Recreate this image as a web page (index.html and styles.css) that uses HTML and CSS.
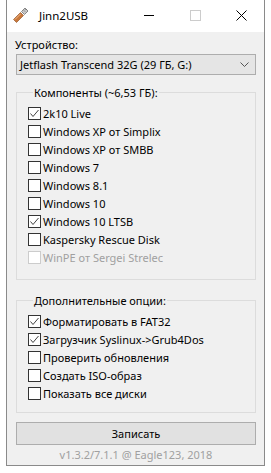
FILE: index.html
```html
<!DOCTYPE html>
<html lang="ru">
<head>
<meta charset="UTF-8">
<title>Jinn2USB</title>
<link rel="stylesheet" href="styles.css">
</head>
<body>
    <div class="window">
        <div class="titlebar">
            <svg class="app-icon" width="16" height="16" viewBox="0 0 16 16">
                <path d="M0.5 12.5 L7.5 5.5 L10.5 8.5 L3.5 15.5 Z" fill="#c8773a" stroke="#8a4a1c" stroke-width="0.6"/>
                <path d="M2 12.5 L7.5 7" stroke="#f3b98a" stroke-width="1"/>
                <path d="M8.5 4.5 L12 1 L15 4 L11.5 7.5 Z" fill="#c9c9c9" stroke="#6e6e6e" stroke-width="0.8"/>
                <path d="M11 3.5 L12 4.5 M12.5 2 L13.5 3" stroke="#555" stroke-width="0.8"/>
            </svg>
            <span class="title">Jinn2USB</span>
            <div class="controls">
                <span class="ctl"><span class="min"></span></span>
                <span class="ctl"><span class="max"></span></span>
                <span class="ctl">
                    <svg width="11" height="11" viewBox="0 0 11 11"><path d="M0.5 0.5 L10.5 10.5 M10.5 0.5 L0.5 10.5" stroke="#000" stroke-width="1"/></svg>
                </span>
            </div>
        </div>

        <div class="content">
            <div class="label">Устройство:</div>
            <div class="select">
                <span>Jetflash Transcend 32G (29 ГБ, G:)</span>
                <svg width="9" height="5" viewBox="0 0 9 5"><path d="M0.5 0.5 L4.5 4.5 L8.5 0.5" stroke="#555" fill="none" stroke-width="1"/></svg>
            </div>

            <fieldset class="group">
                <legend>Компоненты (~6,53 ГБ):</legend>
                <div class="check on">2k10 Live</div>
                <div class="check">Windows XP от Simplix</div>
                <div class="check">Windows XP от SMBB</div>
                <div class="check">Windows 7</div>
                <div class="check">Windows 8.1</div>
                <div class="check">Windows 10</div>
                <div class="check on">Windows 10 LTSB</div>
                <div class="check">Kaspersky Rescue Disk</div>
                <div class="check disabled">WinPE от Sergei Strelec</div>
            </fieldset>

            <fieldset class="group options">
                <legend>Дополнительные опции:</legend>
                <div class="check on">Форматировать в FAT32</div>
                <div class="check on">Загрузчик Syslinux-&gt;Grub4Dos</div>
                <div class="check">Проверить обновления</div>
                <div class="check">Создать ISO-образ</div>
                <div class="check">Показать все диски</div>
            </fieldset>

            <div class="button">Записать</div>
            <div class="version">v1.3.2/7.1.1 @ Eagle123, 2018</div>
        </div>
    </div>
</body>
</html>
```

FILE: styles.css
```css
body {
    margin: 0;
    background-color: #ffffff;
    font-family: 'Noto Sans', 'DejaVu Sans', sans-serif;
    font-size: 11px;
    color: #000000;
}
.window {
    margin: 0 0 0 6px;
    width: 257px;
    height: 465px;
    border: 1px solid #8a8a8a;
    border-top: none;
    display: flex;
    flex-direction: column;
    background-color: #f0f0f0;
}
.titlebar {
    height: 32px;
    background-color: #ffffff;
    display: flex;
    align-items: center;
    flex-shrink: 0;
}
.app-icon {
    margin-left: 6px;
    margin-top: -2px;
}
.title {
    margin-left: 10px;
    font-size: 11.5px;
    margin-top: -2px;
}
.controls {
    margin-left: auto;
    display: flex;
    height: 100%;
}
.ctl {
    width: 46px;
    display: flex;
    align-items: center;
    justify-content: center;
    margin-top: -2px;
}
.min {
    width: 10px;
    height: 1px;
    background-color: #000000;
}
.max {
    width: 9px;
    height: 9px;
    border: 1px solid #cccccc;
}
.content {
    padding: 4px 8px 0 9px;
    flex: 1;
}
.label {
    margin-left: -1px;
    height: 18px;
    line-height: 18px;
}
.select {
    height: 19px;
    border: 1px solid #adadad;
    background-color: #e5e5e5;
    display: flex;
    align-items: center;
    padding: 0 6px 0 3px;
    justify-content: space-between;
}
.group {
    margin: 10px 0 0 0;
    padding: 4px 0 13px 11px;
    border: 1px solid #dcdcdc;
    min-width: 0;
}
.group legend {
    padding: 0 1px;
    margin-left: 5px;
}
.options {
    margin-top: 13px;
    padding-bottom: 10px;
}
.check {
    display: flex;
    align-items: center;
    height: 18px;
}
.check::before {
    content: "";
    width: 11px;
    height: 11px;
    border: 1px solid #333333;
    background-color: #ffffff;
    margin-right: 2px;
    flex-shrink: 0;
}
.check.on::before {
    background: #ffffff url("data:image/svg+xml;utf8,<svg xmlns='http://www.w3.org/2000/svg' width='11' height='11'><path d='M1.5 5.5 L4 8.5 L9.5 2' stroke='%23444' fill='none' stroke-width='1'/></svg>") no-repeat center;
}
.check.disabled {
    color: #a0a0a0;
}
.check.disabled::before {
    border-color: #cccccc;
}
.button {
    margin-top: 9px;
    height: 21px;
    border: 1px solid #adadad;
    background-color: #e1e1e1;
    display: flex;
    align-items: center;
    justify-content: center;
}
.version {
    text-align: center;
    color: #a0a0a0;
    margin-top: 2px;
}
```
